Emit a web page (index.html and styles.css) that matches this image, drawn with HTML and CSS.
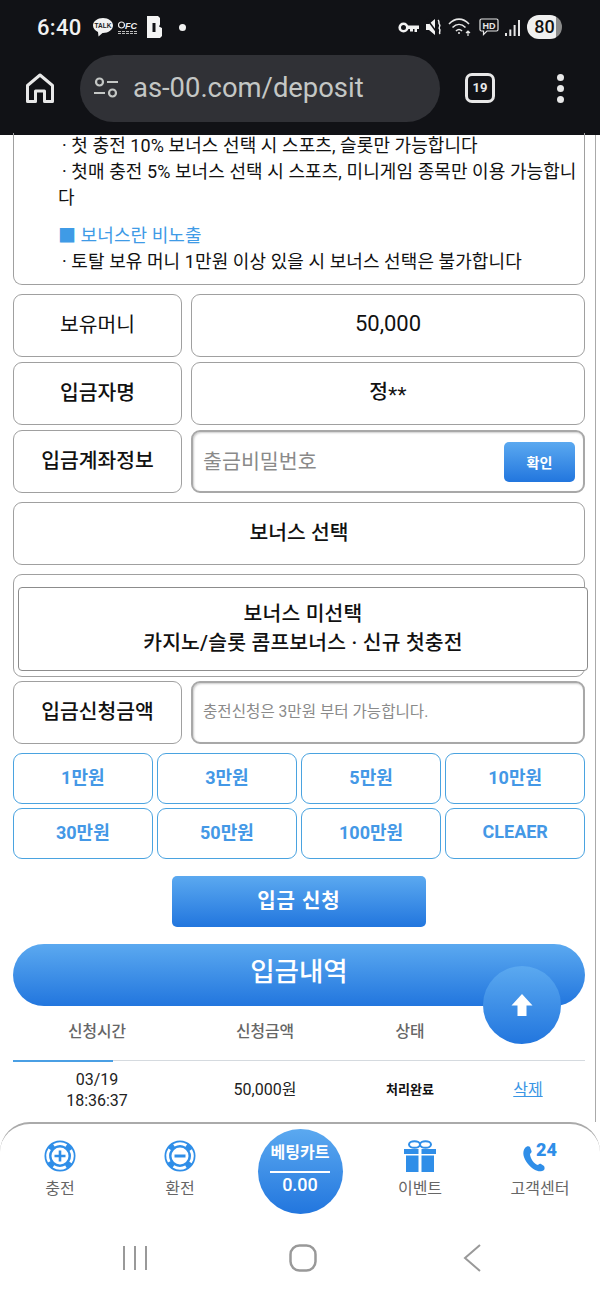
FILE: index.html
```html
<!DOCTYPE html>
<html lang="ko">
<head>
<meta charset="utf-8">
<title>입금</title>
<link rel="stylesheet" href="styles.css">
</head>
<body>
<div class="phone">
  <header class="chrome">
    <div class="status">
      <div class="status-left">
        <span class="time">6:40</span>
        <svg class="ic-talk" width="20" height="20" viewBox="0 0 20 20"><path d="M10 1C4.500 1 0 4.300 0 8.500c0 2.800 2 5.200 5 6.500L5.500 19.500 9.500 16h.5c5.500 0 10-3.300 10-7.500S15.500 1 10 1z" fill="#f2f2f2"/><text x="10" y="11" text-anchor="middle" class="talk-t">TALK</text></svg>
        <svg class="ic-fc" width="21" height="13" viewBox="0 0 21 13"><circle cx="3.500" cy="4" r="3" fill="none" stroke="#eee" stroke-width="1.200"/><text x="7" y="8" class="fc-t">FC</text><path d="M0 10.500h20M0 12.500h20" stroke="#bbb" stroke-width="1" stroke-dasharray="3 1"/></svg>
        <svg class="ic-b" width="15" height="22" viewBox="0 0 15 22"><path d="M0 0H11L13 2V8.500L12 10.500L15 12V20L13 22H0Z" fill="#f4f4f4"/><rect x="5.500" y="7" width="3" height="9" fill="#111216"/></svg>
        <span class="notif-dot"></span>
      </div>
      <div class="status-right">
        <svg width="21" height="11" viewBox="0 0 21 11" fill="none"><circle cx="5.500" cy="5.500" r="3.800" stroke="#f2f2f2" stroke-width="2.600"/><path d="M10 3.500h11v3.500h-2v3h-2.500V7h-1.500v2.500H12V7h-2z" fill="#f2f2f2"/></svg>
        <svg width="16" height="18" viewBox="0 0 16 18" fill="none"><path d="M0 6h3l6-5v16l-6-5H0z" fill="#f2f2f2"/><path d="M1 1l11 15" stroke="#111216" stroke-width="1.500"/><path d="M12 2c2 1.500 0 3 1.500 4.500S12 9.500 13.500 11s-1 3 .5 5" stroke="#f2f2f2" stroke-width="1.500"/></svg>
        <svg width="24" height="20" viewBox="0 0 24 20" fill="none" stroke="#e6e6e6" stroke-width="1.600"><path d="M1 7c6-6.500 14-6.500 20 0"/><path d="M4.500 10.500c4-4 9-4 13 0"/><path d="M8 14c2-2 4-2 6 0"/><circle cx="11" cy="16" r="1" fill="#e6e6e6" stroke="none"/><path d="M20 19v-5M18 16l2-2 2 2" stroke-width="1.200"/></svg>
        <svg width="20" height="18" viewBox="0 0 20 18" fill="none"><path d="M2.500 1h15a1.500 1.500 0 0 1 1.500 1.500v9a1.500 1.500 0 0 1-1.500 1.500H8l-3.500 3.500V13h-2A1.500 1.500 0 0 1 1 11.500v-9A1.500 1.500 0 0 1 2.500 1z" stroke="#e6e6e6" stroke-width="1.200"/><text x="10" y="10.500" text-anchor="middle" class="hd-t">HD</text></svg>
        <svg width="15" height="17" viewBox="0 0 15 17" fill="#e6e6e6"><rect x="0" y="14" width="2" height="3"/><rect x="4.300" y="10.500" width="2" height="6.500"/><rect x="8.600" y="6" width="2" height="11"/><rect x="13" y="1" width="2" height="16"/></svg>
        <span class="battery">80</span>
      </div>
    </div>
    <div class="toolbar">
      <svg class="ic-home" width="28" height="30" viewBox="0 0 28 30" fill="none" stroke="#e8e8e8" stroke-width="3" stroke-linejoin="round"><path d="M1.500 12.500L14 2l12.500 10.500V28.500h-8V18h-9v10.500h-8z"/></svg>
      <div class="urlbar">
        <svg width="24" height="24" viewBox="0 0 24 24" fill="none" stroke="#c4c7c5" stroke-width="2.200"><circle cx="5.500" cy="6" r="3.500"/><path d="M13 6h11M0 17h11"/><circle cx="18.500" cy="17" r="3.500"/></svg>
        <span class="url">as-00.com/deposit</span>
      </div>
      <span class="tabs">19</span>
      <div class="dots"><i></i><i></i><i></i></div>
    </div>
  </header>

  <main class="content">
    <section class="notice">
      <p>· 첫 충전 10% 보너스 선택 시 스포츠, 슬롯만 가능합니다</p>
      <p>· 첫매 충전 5% 보너스 선택 시 스포츠, 미니게임 종목만 이용 가능합니다</p>
      <h4>■ 보너스란 비노출</h4>
      <p>· 토탈 보유 머니 1만원 이상 있을 시 보너스 선택은 불가합니다</p>
    </section>

    <div class="row">
      <div class="box label light">보유머니</div>
      <div class="box value light">50,000</div>
    </div>
    <div class="row">
      <div class="box label">입금자명</div>
      <div class="box value"><span>정<span class="mask">**</span></span></div>
    </div>
    <div class="row">
      <div class="box label">입금계좌정보</div>
      <div class="box field">
        <span class="ph-large">출금비밀번호</span>
        <button class="confirm">확인</button>
      </div>
    </div>
    <div class="box full">보너스 선택</div>
    <div class="box bonus-wrap">
      <div class="bonus-inner">보너스 미선택<br>카지노/슬롯 콤프보너스 · 신규 첫충전</div>
    </div>
    <div class="row">
      <div class="box label">입금신청금액</div>
      <div class="box field"><span class="ph-small">충전신청은 3만원 부터 가능합니다.</span></div>
    </div>

    <div class="amounts">
      <button class="amt">1만원</button>
      <button class="amt">3만원</button>
      <button class="amt">5만원</button>
      <button class="amt">10만원</button>
      <button class="amt">30만원</button>
      <button class="amt">50만원</button>
      <button class="amt">100만원</button>
      <button class="amt">CLEAER</button>
    </div>

    <button class="submit">입금 신청</button>
    <div class="history-title">입금내역</div>

    <div class="thead">
      <span>신청시간</span><span>신청금액</span><span>상태</span><span></span>
    </div>
    <div class="trow">
      <span>03/19<br>18:36:37</span>
      <span>50,000원</span>
      <span class="done">처리완료</span>
      <a class="del" href="#">삭제</a>
    </div>

    <button class="to-top" aria-label="맨 위로">
      <svg width="22" height="24" viewBox="0 0 22 24" fill="#fff"><path d="M11 1L21.500 12.500H15.500V23H6.500V12.500H.5z"/></svg>
    </button>
  </main>

  <nav class="tabbar">
    <a class="tab">
      <svg width="32" height="32" viewBox="0 0 32 32"><circle cx="16" cy="16" r="15.500" fill="#2f8ee8"/><circle cx="16" cy="16" r="12.300" fill="none" stroke="#fff" stroke-width="2.800" stroke-dasharray="13 6.320" transform="rotate(-120 16 16)"/><circle cx="16" cy="16" r="8.500" fill="#fff"/><path d="M16 10.500v11M10.500 16h11" stroke="#2f8ee8" stroke-width="2.600"/></svg>
      <span>충전</span>
    </a>
    <a class="tab">
      <svg width="32" height="32" viewBox="0 0 32 32"><circle cx="16" cy="16" r="15.500" fill="#2f8ee8"/><circle cx="16" cy="16" r="12.300" fill="none" stroke="#fff" stroke-width="2.800" stroke-dasharray="13 6.320" transform="rotate(-120 16 16)"/><circle cx="16" cy="16" r="8.500" fill="#fff"/><path d="M10.500 16h11" stroke="#2f8ee8" stroke-width="3"/></svg>
      <span>환전</span>
    </a>
    <a class="cart">
      <b>베팅카트</b>
      <i></i>
      <strong>0.00</strong>
    </a>
    <a class="tab">
      <svg width="32" height="32" viewBox="0 0 32 32" fill="#2f8ee8"><ellipse cx="10.500" cy="4.500" rx="5.500" ry="3.300" fill="none" stroke="#2f8ee8" stroke-width="2"/><ellipse cx="21.500" cy="4.500" rx="5.500" ry="3.300" fill="none" stroke="#2f8ee8" stroke-width="2"/><rect x="0" y="9" width="14.500" height="5"/><rect x="17.500" y="9" width="14.500" height="5"/><rect x="2" y="15.500" width="12.500" height="16.500"/><rect x="17.500" y="15.500" width="12.500" height="16.500"/></svg>
      <span>이벤트</span>
    </a>
    <a class="tab">
      <svg width="36" height="32" viewBox="0 0 36 32"><path d="M3 8c-3 4-2 10 3 16s10 8 14 7c3-.5 3-3 2-5l-3-2c-1-.5-2 0-3 1-4-1-8-7-8-11 1-1 2-2 1.500-3L8 7C7 6 4.500 6 3 8z" fill="#2f8ee8"/><text x="14" y="15.500" class="t24">24</text></svg>
      <span>고객센터</span>
    </a>
  </nav>

  <div class="softkeys">
    <svg width="26" height="26" viewBox="0 0 26 26" stroke="#999" stroke-width="2" fill="none"><path d="M2 1v24M13 1v24M24 1v24"/></svg>
    <svg width="28" height="28" viewBox="0 0 28 28" stroke="#999" stroke-width="2.500" fill="none"><rect x="1.500" y="1.500" width="25" height="25" rx="9"/></svg>
    <svg width="18" height="28" viewBox="0 0 18 28" stroke="#999" stroke-width="2" fill="none"><path d="M17 1L2 14l15 13"/></svg>
  </div>
</div>
</body>
</html>
```
FILE: styles.css
```css
* { box-sizing: border-box; }
html, body { margin: 0; padding: 0; background: #fff; }
body { font-family: "Roboto", "Noto Sans CJK KR", sans-serif; color: #111; }
button { font-family: inherit; cursor: pointer; }
p, h4 { margin: 0; font-weight: 400; }

.phone { width: 600px; height: 1300px; display: flex; flex-direction: column; overflow: hidden; position: relative; }

/* browser chrome */
.chrome { height: 135px; flex: none; background: #111216; display: flex; flex-direction: column; padding-bottom: 7px; }
.status { height: 48px; padding: 6px 38px 0 37px; display: flex; justify-content: space-between; align-items: center; flex: none; }
.status-left, .status-right { display: flex; align-items: center; }
.status-right { gap: 6.600px; }
.time { font-size: 22px; font-weight: 500; color: #f2f2f2; width: 45px; letter-spacing: .3px; }
.ic-talk { margin-left: 11px; }
.talk-t { font: 700 6.500px "Liberation Sans", sans-serif; fill: #222; }
.ic-fc { margin-left: 5px; }
.fc-t { font: italic 700 9px "Liberation Sans", sans-serif; fill: #eee; }
.ic-b { margin-left: 8px; }
.notif-dot { width: 7px; height: 7px; border-radius: 50%; background: #f2f2f2; margin-left: 17px; }
.hd-t { font: 700 9px "Liberation Sans", sans-serif; fill: #e6e6e6; }
.battery { width: 35px; height: 24px; border-radius: 12px; background: linear-gradient(90deg, #f0f0f0 82%, #8a8a8a 82%); color: #111; font-size: 18px; font-weight: 500; line-height: 24px; text-align: center; }
.toolbar { flex: 1; min-height: 0; display: flex; align-items: center; }
.ic-home { margin-left: 26px; flex: none; }
.urlbar { width: 360px; height: 67px; margin-left: 26px; border-radius: 34px; background: #303136; display: flex; align-items: center; padding-left: 14px; gap: 15px; flex: none; }
.url { font-size: 27.400px; color: #c4c7c5; }
.tabs { width: 30px; height: 30px; margin-left: 25px; border: 3px solid #e8e8e8; border-radius: 7px; color: #e8e8e8; font-size: 13px; font-weight: 700; line-height: 24px; text-align: center; flex: none; }
.dots { margin-left: 62px; display: flex; flex-direction: column; gap: 4px; }
.dots i { width: 7px; height: 7px; border-radius: 50%; background: #e8e8e8; display: block; }

/* page */
.content { flex: 1; min-height: 0; width: 596px; position: relative; padding: 0 10px 0 13px; border-right: 1px solid #aaa; }
.box { border: 1.500px solid #a0a0a0; border-radius: 9px; background: #fff; }
.notice { height: 152px; margin-top: -2px; padding: 0 0 0 44px; border: 1.500px solid #a0a0a0; border-top: 0; border-radius: 0 0 9px 9px; font-size: 18px; line-height: 26px; letter-spacing: .08px; }
.notice p { padding-right: 2px; text-indent: 4px; }
.notice h4 { margin-top: 12px; color: #3f9be6; }
.row { display: flex; gap: 9px; margin-top: 9px; height: 63px; }
.row + .row { margin-top: 5px; }
.label { width: 169px; flex: none; display: flex; align-items: center; justify-content: center; font-size: 20.400px; font-weight: 500; padding-bottom: 5px; }
.value { flex: 1; display: flex; align-items: center; justify-content: center; font-size: 20.400px; font-weight: 500; padding-bottom: 5px; }
.light { font-weight: 400; }
.value.light { font-size: 22px; }
.mask { font-family: "Liberation Sans", sans-serif; font-weight: 400; font-size: 24px; vertical-align: -5px; line-height: 1; }
.field { flex: 1; display: flex; align-items: center; justify-content: space-between; padding: 0 8px 0 10px; border-width: 2px; border-color: #a8a8a8; box-shadow: inset 1px 1px 2px #ccc; }
.ph-large { font-size: 20.600px; color: #8a8a8a; padding-bottom: 4px; }
.ph-small { font-size: 15.600px; color: #8a8a8a; padding-bottom: 5px; }
.confirm { width: 71px; height: 40px; border: 0; border-radius: 5px; background: linear-gradient(#5ba9f0, #2276de); color: #fff; font-size: 14px; font-weight: 700; }
.full { height: 63px; margin-top: 9px; display: flex; align-items: center; justify-content: center; font-size: 20.400px; font-weight: 500; padding-bottom: 5px; }
.bonus-wrap { height: 103px; margin-top: 9px; padding-top: 12px; }
.bonus-inner { width: 570px; height: 84px; margin-left: 4px; border: 1.500px solid #8c8c8c; border-radius: 4px; background: #fff; font-size: 20.400px; font-weight: 500; line-height: 29px; letter-spacing: .2px; text-align: center; padding-top: 12px; }
.bonus-wrap + .row { margin-top: 4px; }
.amounts { display: grid; grid-template-columns: repeat(4, 1fr); gap: 4px 4.500px; margin-top: 9px; }
.amt { height: 51px; border: 1.500px solid #4aa3e0; border-radius: 9px; background: #fff; color: #4498e6; font-size: 18px; font-weight: 700; padding: 0 0 5px; }
.submit { display: block; width: 254px; height: 51px; margin: 17px 0 0 159px; border: 0; border-radius: 5px; background: linear-gradient(#5ba9f0, #2276de); color: #fff; font-size: 20px; font-weight: 700; letter-spacing: 1px; padding: 0 0 5px; }
.history-title { height: 62px; margin-top: 17px; border-radius: 31px; background: linear-gradient(#5ba9f0, #2276de); color: #fff; font-size: 26.500px; font-weight: 500; line-height: 55px; text-align: center; }
.thead, .trow { display: grid; grid-template-columns: 168px 168px 122px 114px; text-align: center; align-items: center; }
.thead { height: 55px; padding-bottom: 6px; font-size: 15.800px; font-weight: 500; color: #666; border-bottom: 1.500px solid #d5dadf; position: relative; }
.thead::after { content: ""; position: absolute; left: 0; bottom: -1.500px; width: 100px; height: 2px; background: #4a9fe4; }
.trow { height: 59px; padding-bottom: 2px; font-size: 16px; line-height: 21px; color: #222; }
.done { font-size: 13px; font-weight: 700; color: #111; }
.del { font-size: 16px; color: #3a95e4; }
.to-top { position: absolute; left: 483px; top: 831px; width: 78px; height: 78px; border: 0; border-radius: 50%; background: linear-gradient(#5ba9f0, #2276de); display: flex; align-items: center; justify-content: center; padding: 0; }

/* bottom nav */
.tabbar { height: 108px; flex: none; display: grid; grid-template-columns: repeat(5, 120px); background: #fff; border-top: 2px solid #aaa; border-radius: 30px 30px 0 0; position: relative; z-index: 2; padding-top: 16px; }
.tab { display: flex; flex-direction: column; align-items: center; font-size: 16px; color: #666; gap: 3px; }
.cart { width: 85px; height: 85px; justify-self: center; margin-top: -11px; border-radius: 50%; background: linear-gradient(#5ba9f0, #2276de); color: #fff; display: flex; flex-direction: column; align-items: center; padding-top: 11px; }
.cart b { font-size: 16px; font-weight: 700; line-height: 26px; }
.cart i { display: block; width: 60px; height: 2px; background: #fff; margin-top: 5px; }
.cart strong { font-size: 18px; font-weight: 500; line-height: 26px; margin-top: -1px; }
.t24 { font: 900 18px "Roboto", sans-serif; fill: #2f8ee8; }

.softkeys { height: 70px; flex: none; display: flex; align-items: center; background: #fff; padding: 0 0 14px 122px; }
.softkeys svg:nth-child(2) { margin-left: 141px; }
.softkeys svg:nth-child(3) { margin-left: 146px; }
```
